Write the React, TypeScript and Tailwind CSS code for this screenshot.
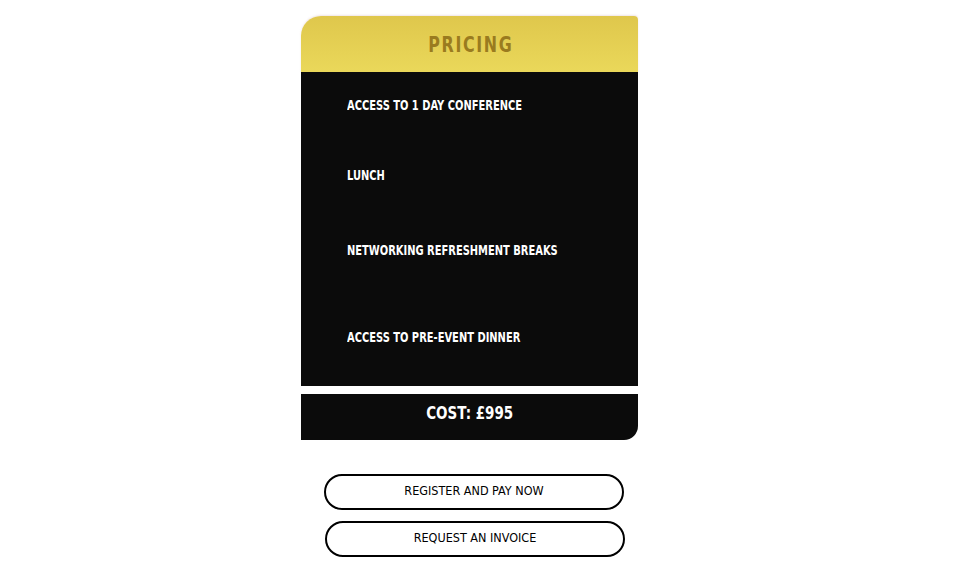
export default function App() {
  const items = [
    { label: "ACCESS TO 1 DAY CONFERENCE", h: "h-[70px]" },
    { label: "LUNCH", h: "h-[75px]" },
    { label: "NETWORKING REFRESHMENT BREAKS", h: "h-[87px]" },
    { label: "ACCESS TO PRE-EVENT DINNER", h: "h-[50px]" },
  ];

  return (
    <div className="min-h-[571px] w-full bg-white flex flex-col items-center pt-4">
      <div className="w-[337px] mr-[17px] flex flex-col">
        {/* HEADER */}
        <div className="h-14 rounded-tl-[20px] rounded-tr-[4px] bg-gradient-to-b from-[#dfc74c] to-[#ead85a] flex items-center justify-center shadow-[0_-1px_2px_rgba(200,150,150,0.25)]">
          <span className="inline-block scale-x-[0.82] font-['DejaVu_Sans_Condensed',sans-serif] font-bold text-[21.5px] tracking-[2px] text-[#9a7b1f] ml-[2px] mt-[3px]">
            PRICING
          </span>
        </div>

        {/* LISTA */}
        <div className="bg-[#0b0b0b] pt-[20px] pb-[38px] pl-[46px]">
          {items.map((it) => (
            <div key={it.label} className={`${it.h} last:h-auto`}>
              <span className="inline-block origin-left scale-x-[0.76] font-['DejaVu_Sans_Condensed',sans-serif] font-bold text-[14.5px] leading-[18px] text-white">
                {it.label}
              </span>
            </div>
          ))}
        </div>

        {/* PRECIO */}
        <div className="mt-2 h-[46px] bg-[#0b0b0b] rounded-br-[14px] flex items-center justify-center">
          <span className="inline-block scale-x-[0.81] font-['DejaVu_Sans_Condensed',sans-serif] font-bold text-[18.5px] text-white mb-[9px]">
            COST: £995
          </span>
        </div>
      </div>

      {/* BOTONES */}
      <div className="flex flex-col items-center gap-[11px] mt-[34px] mr-[8px]">
        <button className="w-[300px] h-9 rounded-full border-2 border-black text-[12.5px] text-black font-['DejaVu_Sans_Condensed',sans-serif] pb-[2px]">
          REGISTER AND PAY NOW
        </button>
        <button className="w-[300px] h-9 ml-[2px] rounded-full border-2 border-black text-[12.5px] text-black font-['DejaVu_Sans_Condensed',sans-serif] pb-[2px]">
          REQUEST AN INVOICE
        </button>
      </div>
    </div>
  );
}
